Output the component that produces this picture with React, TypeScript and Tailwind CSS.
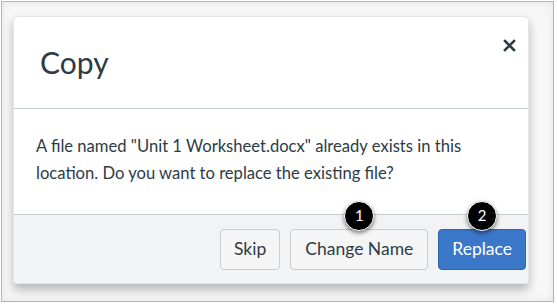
import React from "react";

function Badge({ n }: { n: number }) {
    return (
        <div className="absolute -top-[29px] left-1/2 -translate-x-1/2 w-[30px] h-[30px] rounded-full bg-black border border-white text-white text-[15px] flex items-center justify-center shadow-[0_2px_4px_rgba(0,0,0,0.5)]">
            {n}
        </div>
    );
}

export default function App() {
    return (
        <div className="w-[557px] h-[304px] bg-white p-[1px] font-['Lato','Liberation_Sans',sans-serif]">
            <div className="w-[553px] h-[301px] border border-[#b5b5b5] bg-[#f7f7f7] shadow-[inset_0_0_8px_rgba(0,0,0,0.08)] pt-[14px] pl-[11px]">
                <div className="w-[516px] h-[268px] bg-white rounded-[4px] flex flex-col shadow-[0_6px_10px_rgba(0,0,0,0.25)] border border-[#e6e6e6]">
                    <div className="h-[92px] flex items-center justify-between pl-[26px] pr-[12px] border-b border-[#c7cdd1] shrink-0">
                        <h1 className="text-[30px] text-[#2d3b45] leading-none -mt-[2px]">Copy</h1>
                        <svg width="13" height="13" viewBox="0 0 13 13" className="mb-[34px]">
                            <path d="M2 2 L11 11 M11 2 L2 11" stroke="#2d3b45" strokeWidth="2.6" strokeLinecap="square" />
                        </svg>
                    </div>
                    <div className="flex-1 px-[22px] pt-[24px] text-[16.6px] leading-[27px] text-[#2d3b45]">
                        A file named "Unit 1 Worksheet.docx" already exists in this location. Do you want to replace the existing file?
                    </div>
                    <div className="h-[69px] bg-[#f2f3f4] border-t border-[#c7cdd1] rounded-b-[4px] flex items-center justify-end gap-[10px] pr-[2px] shrink-0">
                        <button className="h-[41px] px-[13px] rounded-[4px] border border-[#c7cdd1] bg-[#f5f5f5] text-[#2d3b45] text-[17.5px]">Skip</button>
                        <button className="relative h-[41px] px-[14px] rounded-[4px] border border-[#c7cdd1] bg-[#f5f5f5] text-[#2d3b45] text-[17.5px]">
                            Change Name
                            <Badge n={1} />
                        </button>
                        <button className="relative h-[41px] px-[13px] rounded-[4px] border border-[#2c65b0] bg-[#3a77c8] text-white text-[17.5px]">
                            Replace
                            <Badge n={2} />
                        </button>
                    </div>
                </div>
            </div>
        </div>
    );
}
